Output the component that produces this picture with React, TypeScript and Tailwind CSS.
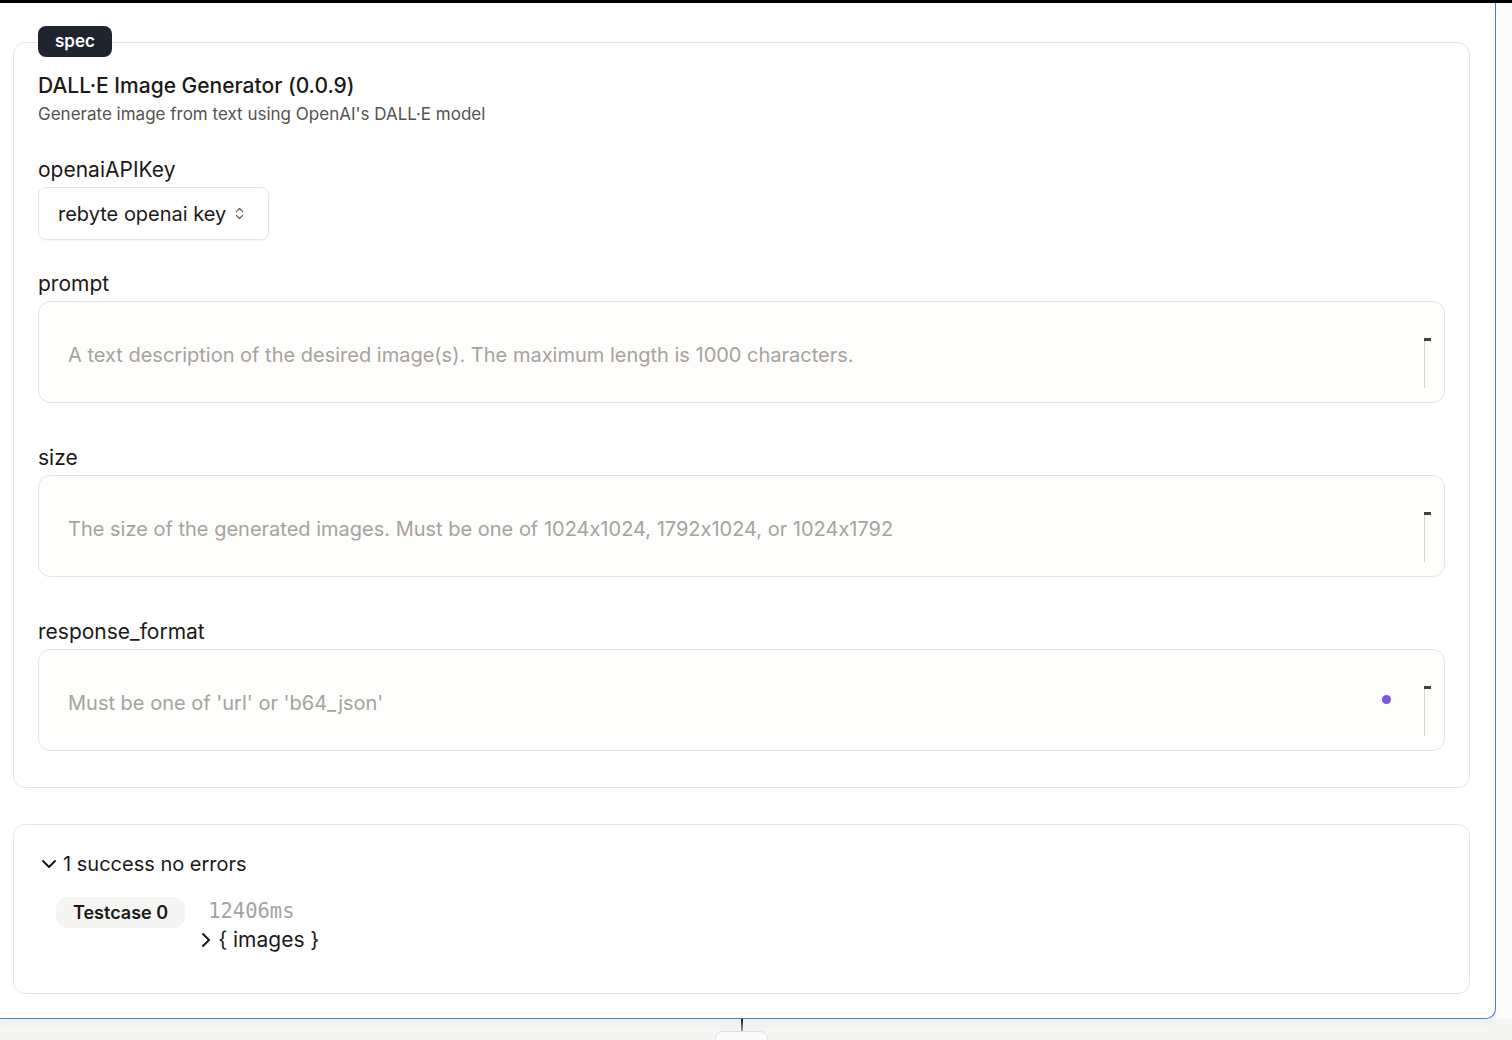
import { ChevronDown, ChevronRight, ChevronsUpDown } from "lucide-react";

const fields = [
  {
    name: "prompt",
    placeholder: "A text description of the desired image(s). The maximum length is 1000 characters.",
    dot: false,
  },
  {
    name: "size",
    placeholder: "The size of the generated images. Must be one of 1024x1024, 1792x1024, or 1024x1792",
    dot: false,
  },
  {
    name: "response_format",
    placeholder: "Must be one of 'url' or 'b64_json'",
    dot: true,
  },
];

const TextField = ({ name, placeholder, dot }: { name: string; placeholder: string; dot: boolean }) => (
  <div className="mt-[30px] mb-[11px] flex flex-col gap-[3px]">
    <label className="text-[21px] leading-[28px] text-[#1c1917]">{name}</label>
    <div className="relative flex h-[102px] items-center rounded-xl border border-[#e7e5e4] bg-[#fdfdfc] pl-[29px] pr-16 pt-[6px]">
      <span className="text-[20px] text-[#a8a29e]">{placeholder}</span>
      {dot && <div className="absolute right-[53px] top-[45px] h-[9px] w-[9px] rounded-full bg-[#7c55e6]" />}
      {/* resize handle */}
      <div className="absolute right-[19px] top-[36px] h-[50px] w-px bg-[#d6d3d1]" />
      <div className="absolute right-[13px] top-[36px] h-[3px] w-[7px] bg-[#44403c]" />
    </div>
  </div>
);

export default function App() {
  return (
    <div
      className="flex h-[1040px] flex-col overflow-hidden bg-[#f5f5f4] [font-feature-settings:'calt'_0]"
      style={{ fontFamily: "Inter, 'Noto Sans', sans-serif" }}
    >
      <div className="h-[3px] w-full shrink-0 bg-black" />
      <div className="flex shrink-0">
        <div className="w-[1496px] rounded-br-[10px] border-r border-b border-[#4a7bea] bg-white pb-[24px] pl-[13px] pr-[25px] pt-[39px] shadow-[0_4px_10px_rgba(0,0,0,0.04)]">
          {/* spec card */}
          <div className="relative flex flex-col rounded-xl border border-[#e7e5e4] px-6 pb-[25px] pt-[29px]">
            <div className="absolute -top-[17px] left-[24px] rounded-lg bg-[#1f2430] px-[17px] py-[3px] text-[17px] font-semibold leading-[25px] text-white">
              spec
            </div>
            <div className="text-[21px] font-medium leading-[28px] text-[#1c1917]">DALL·E Image Generator (0.0.9)</div>
            <div className="mt-[2px] text-[17px] leading-[24px] text-[#57534e]">Generate image from text using OpenAI's DALL·E model</div>

            <div className="mt-[30px] flex flex-col gap-[3px]">
              <label className="text-[21px] leading-[28px] text-[#1c1917]">openaiAPIKey</label>
              <div className="flex h-[53px] w-[231px] items-center gap-[6px] rounded-lg border border-[#e7e5e4] bg-white pl-[19px] shadow-[0_1px_2px_rgba(0,0,0,0.04)]">
                <span className="text-[20px] text-[#1c1917]">rebyte openai key</span>
                <ChevronsUpDown className="h-[15px] w-[15px] text-[#57534e]" strokeWidth={1.75} />
              </div>
            </div>

            {fields.map((f) => (
              <TextField key={f.name} {...f} />
            ))}
          </div>

          {/* results card */}
          <div className="mt-[36px] rounded-xl border border-[#e7e5e4] pb-[39px] pl-[23px] pt-[25px]">
            <div className="flex items-center gap-[2px] text-[20px] leading-[28px] text-[#1c1917]">
              <ChevronDown className="h-6 w-6" strokeWidth={2} />
              <span>1 success no errors</span>
            </div>
            <div className="ml-[19px] mt-[19px] flex items-start gap-[23px]">
              <div className="rounded-xl bg-[#f5f5f4] px-[17px] py-[3px] text-[18px] font-semibold leading-[25px] text-[#1c1917]">
                Testcase 0
              </div>
              <div className="flex flex-col">
                <span className="text-[20.5px] leading-[28px] text-[#a8a29e]" style={{ fontFamily: "'DejaVu Sans Mono', monospace" }}>
                  12406ms
                </span>
                <div className="-ml-[14px] flex items-center text-[21px] leading-[29px] text-[#1c1917]">
                  <ChevronRight className="h-6 w-6" strokeWidth={2} />
                  <span>{"{ images }"}</span>
                </div>
              </div>
            </div>
          </div>
        </div>
        <div className="flex-1 bg-[#fcfcfc]" />
      </div>

      {/* bottom strip */}
      <div className="relative flex-1">
        <div className="absolute left-[741px] top-0 h-[12px] w-[2px] bg-gradient-to-b from-[#1c1917] to-[#a8a29e]" />
        <div className="absolute left-[715px] top-[12px] h-[30px] w-[53px] rounded-lg border border-[#e0e0df] bg-[#fafafa]" />
      </div>
    </div>
  );
}
